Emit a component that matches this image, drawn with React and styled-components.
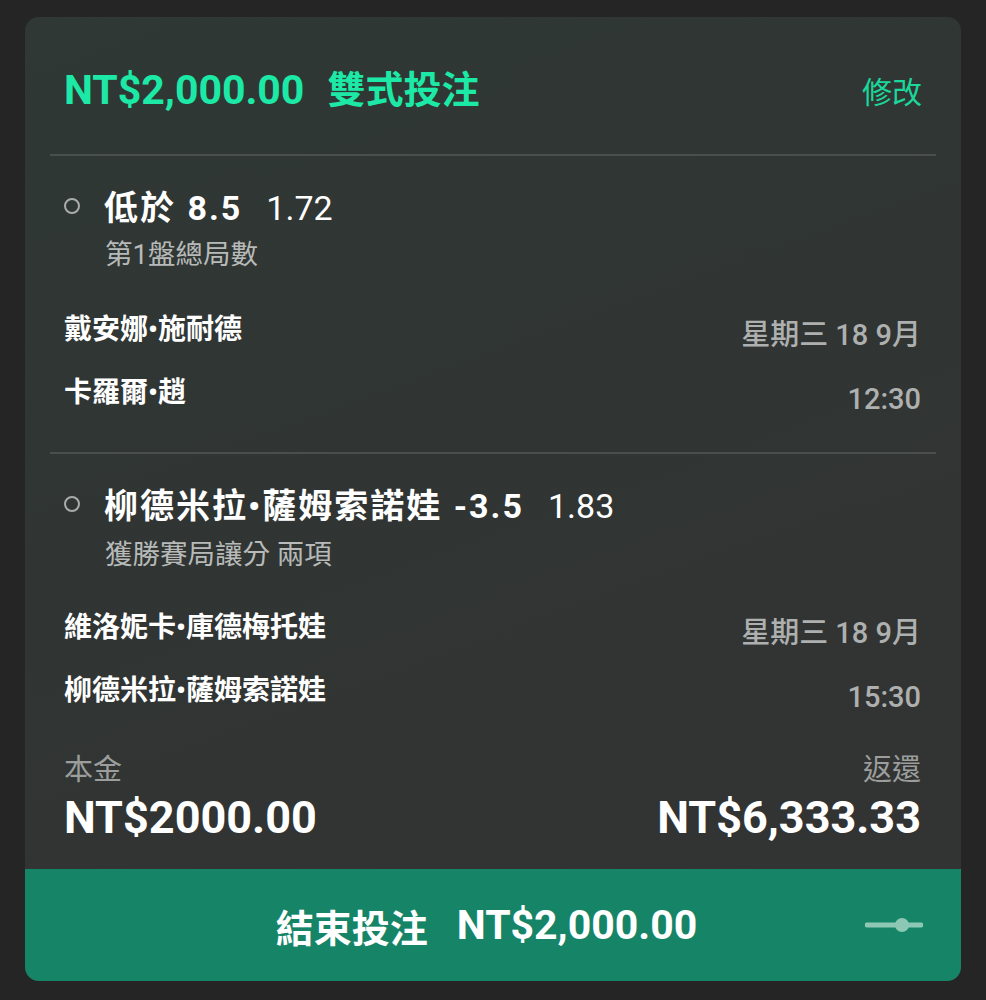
import React from "react";
import styled, { createGlobalStyle } from "styled-components";

const Global = createGlobalStyle`
  html, body { margin: 0; padding: 0; background: #252525; }
  body { font-family: Roboto, "Noto Sans CJK TC", sans-serif; -webkit-font-smoothing: antialiased; }
`;

const Page = styled.div`
  padding: 17px 25px 19px 25px;
  box-sizing: border-box;
  width: 986px;
`;

const Card = styled.div`
  border-radius: 14px;
  overflow: hidden;
  background: linear-gradient(160deg, #2f3835 0%, #303533 45%, #333333 100%);
  display: flex;
  flex-direction: column;
`;

const Header = styled.div`
  display: flex;
  align-items: center;
  justify-content: space-between;
  padding: 49px 39px 40px 39px;
  height: 48px;
`;

const HeaderTitle = styled.div`
  display: flex;
  align-items: center;
  gap: 23px;
  color: #1de9a7;
  font-weight: 700;
  font-size: 41px;
  line-height: 48px;
`;

const HeaderWord = styled.span`
  font-size: 38px;
`;

const Edit = styled.div`
  color: #1bd79a;
  font-size: 30px;
  line-height: 48px;
  font-family: "Noto Sans CJK TC", sans-serif;
`;

const Divider = styled.div`
  height: 2px;
  margin: 0 25px;
  background: #4a4f4d;
`;

const Section = styled.div`
  display: flex;
  flex-direction: column;
  padding: 32px 40px 0 39px;
`;

const SelectionRow = styled.div`
  display: flex;
  align-items: center;
  gap: 24px;
  height: 40px;
`;

const Radio = styled.span`
  width: 12px;
  height: 12px;
  border-radius: 50%;
  border: 2.5px solid #a9acaa;
  flex: none;
  margin-top: -4px;
`;

const Selection = styled.div`
  color: #ffffff;
  font-size: 34px;
  line-height: 40px;
  font-weight: 700;
  white-space: nowrap;
  letter-spacing: 2px;
  word-spacing: 1px;
`;

const Odds = styled.span`
  font-weight: 400;
  margin-left: 24px;
  letter-spacing: 0;
`;

const Market = styled.div`
  color: #b7bab8;
  font-size: 27.5px;
  line-height: 32px;
  margin-top: ${(p) => p.$gap}px;
  padding-left: 41px;
`;

const Matches = styled.div`
  display: flex;
  flex-direction: column;
  gap: 22px;
  margin-top: ${(p) => p.$top}px;
  padding-bottom: ${(p) => p.$bottom}px;
`;

const MatchRow = styled.div`
  display: flex;
  justify-content: space-between;
  align-items: flex-start;
`;

const Team = styled.div`
  color: #ffffff;
  font-size: 28px;
  line-height: 36px;
  font-weight: 600;
`;

const When = styled.div`
  color: #aeb0af;
  font-size: 29px;
  line-height: 36px;
  font-weight: 500;
  padding-top: ${(p) => p.$offset}px;
`;

const Totals = styled.div`
  display: flex;
  justify-content: space-between;
  padding: 0 40px 26px 39px;
`;

const TotalCol = styled.div`
  display: flex;
  flex-direction: column;
  align-items: ${(p) => (p.$right ? "flex-end" : "flex-start")};
  gap: 6px;
`;

const TotalLabel = styled.div`
  color: #9b9e9c;
  font-size: 29px;
  line-height: 34px;
`;

const TotalValue = styled.div`
  color: #ffffff;
  font-size: 45px;
  line-height: 50px;
  font-weight: 700;
`;

const CashOut = styled.div`
  position: relative;
  height: 112px;
  background: #168467;
  display: flex;
  align-items: center;
  justify-content: center;
  gap: 29px;
  color: #ffffff;
  font-size: 41px;
  font-weight: 700;
  padding-right: 13px;
`;

const CashOutLabel = styled.span`
  font-size: 38px;
`;

const SliderIcon = styled.svg`
  position: absolute;
  right: 38px;
  top: 50%;
  transform: translateY(-50%);
`;

const matches = [
  {
    selection: "低於 8.5",
    odds: "1.72",
    market: "第1盤總局數",
    home: "戴安娜•施耐德",
    away: "卡羅爾•趙",
    date: "星期三 18 9月",
    time: "12:30",
    gap: 11,
    top: 41,
    bottom: 35,
  },
  {
    selection: "柳德米拉•薩姆索諾娃 -3.5",
    odds: "1.83",
    market: "獲勝賽局讓分 兩項",
    home: "維洛妮卡•庫德梅托娃",
    away: "柳德米拉•薩姆索諾娃",
    date: "星期三 18 9月",
    time: "15:30",
    gap: 13,
    top: 39,
    bottom: 38,
  },
];

export default function App() {
  return (
    <>
      <Global />
      <Page>
        <Card>
          <Header>
            <HeaderTitle>
              <span>NT$2,000.00</span>
              <HeaderWord>雙式投注</HeaderWord>
            </HeaderTitle>
            <Edit>修改</Edit>
          </Header>
          {matches.map((m, i) => (
            <React.Fragment key={i}>
              <Divider />
              <Section>
                <SelectionRow>
                  <Radio />
                  <Selection>
                    {m.selection}
                    <Odds>{m.odds}</Odds>
                  </Selection>
                </SelectionRow>
                <Market $gap={m.gap}>{m.market}</Market>
                <Matches $top={m.top} $bottom={m.bottom}>
                  <MatchRow>
                    <Team>{m.home}</Team>
                    <When $offset={5}>{m.date}</When>
                  </MatchRow>
                  <MatchRow>
                    <Team>{m.away}</Team>
                    <When $offset={6}>{m.time}</When>
                  </MatchRow>
                </Matches>
              </Section>
            </React.Fragment>
          ))}
          <Totals>
            <TotalCol>
              <TotalLabel>本金</TotalLabel>
              <TotalValue>NT$2000.00</TotalValue>
            </TotalCol>
            <TotalCol $right>
              <TotalLabel>返還</TotalLabel>
              <TotalValue>NT$6,333.33</TotalValue>
            </TotalCol>
          </Totals>
          <CashOut>
            <CashOutLabel>結束投注</CashOutLabel>
            <span>NT$2,000.00</span>
            <SliderIcon width="58" height="20" viewBox="0 0 58 20">
              <line x1="2" y1="10" x2="56" y2="10" stroke="#8cc8b4" strokeWidth="5" strokeLinecap="round" />
              <circle cx="37" cy="10" r="7" fill="#8cc8b4" />
            </SliderIcon>
          </CashOut>
        </Card>
      </Page>
    </>
  );
}
